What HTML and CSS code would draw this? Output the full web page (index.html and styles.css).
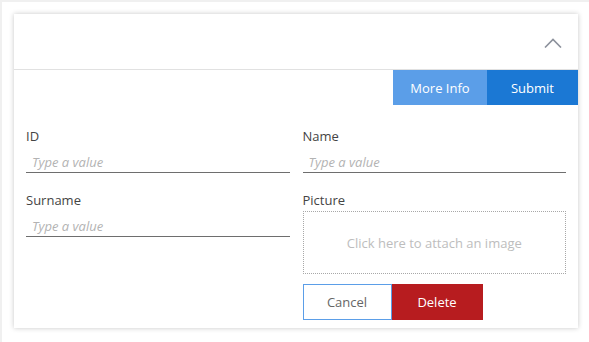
FILE: index.html
```html
<!DOCTYPE html>
<html lang="en">
<head>
  <meta charset="UTF-8" />
  <title>Form</title>
  <link rel="stylesheet" href="styles.css">
</head>
<body>
  <div class="card">
    <div class="card-header">
      <svg class="chevron" width="18" height="10" viewBox="0 0 18 10">
        <polyline points="1,9.5 9,1.5 17,9.5" fill="none" stroke="#8c919c" stroke-width="1.6" />
      </svg>
    </div>
    <div class="actions">
      <button class="btn more-info">More Info</button>
      <button class="btn submit">Submit</button>
    </div>
    <div class="form">
      <div class="column">
        <div class="field">
          <label>ID</label>
          <input type="text" placeholder="Type a value">
        </div>
        <div class="field">
          <label>Surname</label>
          <input type="text" placeholder="Type a value">
        </div>
      </div>
      <div class="column">
        <div class="field">
          <label>Name</label>
          <input type="text" placeholder="Type a value">
        </div>
        <div class="field">
          <label>Picture</label>
          <div class="attach">Click here to attach an image</div>
        </div>
        <div class="form-buttons">
          <button class="btn cancel">Cancel</button>
          <button class="btn delete">Delete</button>
        </div>
      </div>
    </div>
  </div>
</body>
</html>
```

FILE: styles.css
```css
* {
  margin: 0;
  padding: 0;
  box-sizing: border-box;
}
html, body {
  height: 100%;
}
body {
  background: #fff;
  border-top: 2px solid #f0f0f0;
  border-left: 2px solid #f0f0f0;
  padding: 12px 0 0 12px;
  font-family: 'Open Sans', 'Noto Sans', sans-serif;
  font-size: 13px;
  color: #444;
}
.card {
  width: 564px;
  height: 314px;
  background: #fff;
  box-shadow: 0 0 5px rgba(0, 0, 0, 0.22);
}
.card-header {
  height: 56px;
  border-bottom: 1px solid #e1e1e1;
  display: flex;
  justify-content: flex-end;
  align-items: center;
  padding-right: 16px;
  padding-top: 2px;
}
.actions {
  display: flex;
  justify-content: flex-end;
  height: 35px;
}
.btn {
  border: none;
  font-family: inherit;
  font-size: 13px;
  color: #fff;
  cursor: pointer;
}
.more-info {
  width: 94px;
  background: #5b9ee8;
}
.submit {
  width: 91px;
  background: #1b78d4;
}
.form {
  display: grid;
  grid-template-columns: 1fr 1fr;
  column-gap: 13px;
  padding: 21px 12px 0 12px;
}
.column {
  display: flex;
  flex-direction: column;
  gap: 17px;
}
.field label {
  display: block;
  height: 20px;
  line-height: 20px;
  color: #444;
}
.field input {
  display: block;
  width: 100%;
  height: 27px;
  border: none;
  border-bottom: 1px solid #6e6e6e;
  outline: none;
  padding: 5px 6px 0;
  font-family: inherit;
  font-size: 13px;
}
.field input::placeholder {
  font-style: italic;
  color: #b3b3b3;
}
.attach {
  margin-top: 1px;
  height: 63px;
  border: 1px dotted #a8a8a8;
  display: flex;
  justify-content: center;
  align-items: center;
  color: #bdbdbd;
  font-size: 13px;
}
.form-buttons {
  display: flex;
  margin-top: -7px;
  height: 36px;
}
.cancel {
  width: 89px;
  background: #fff;
  border: 1px solid #5b9ee8;
  color: #666;
}
.delete {
  width: 91px;
  background: #b71c1f;
}
```
